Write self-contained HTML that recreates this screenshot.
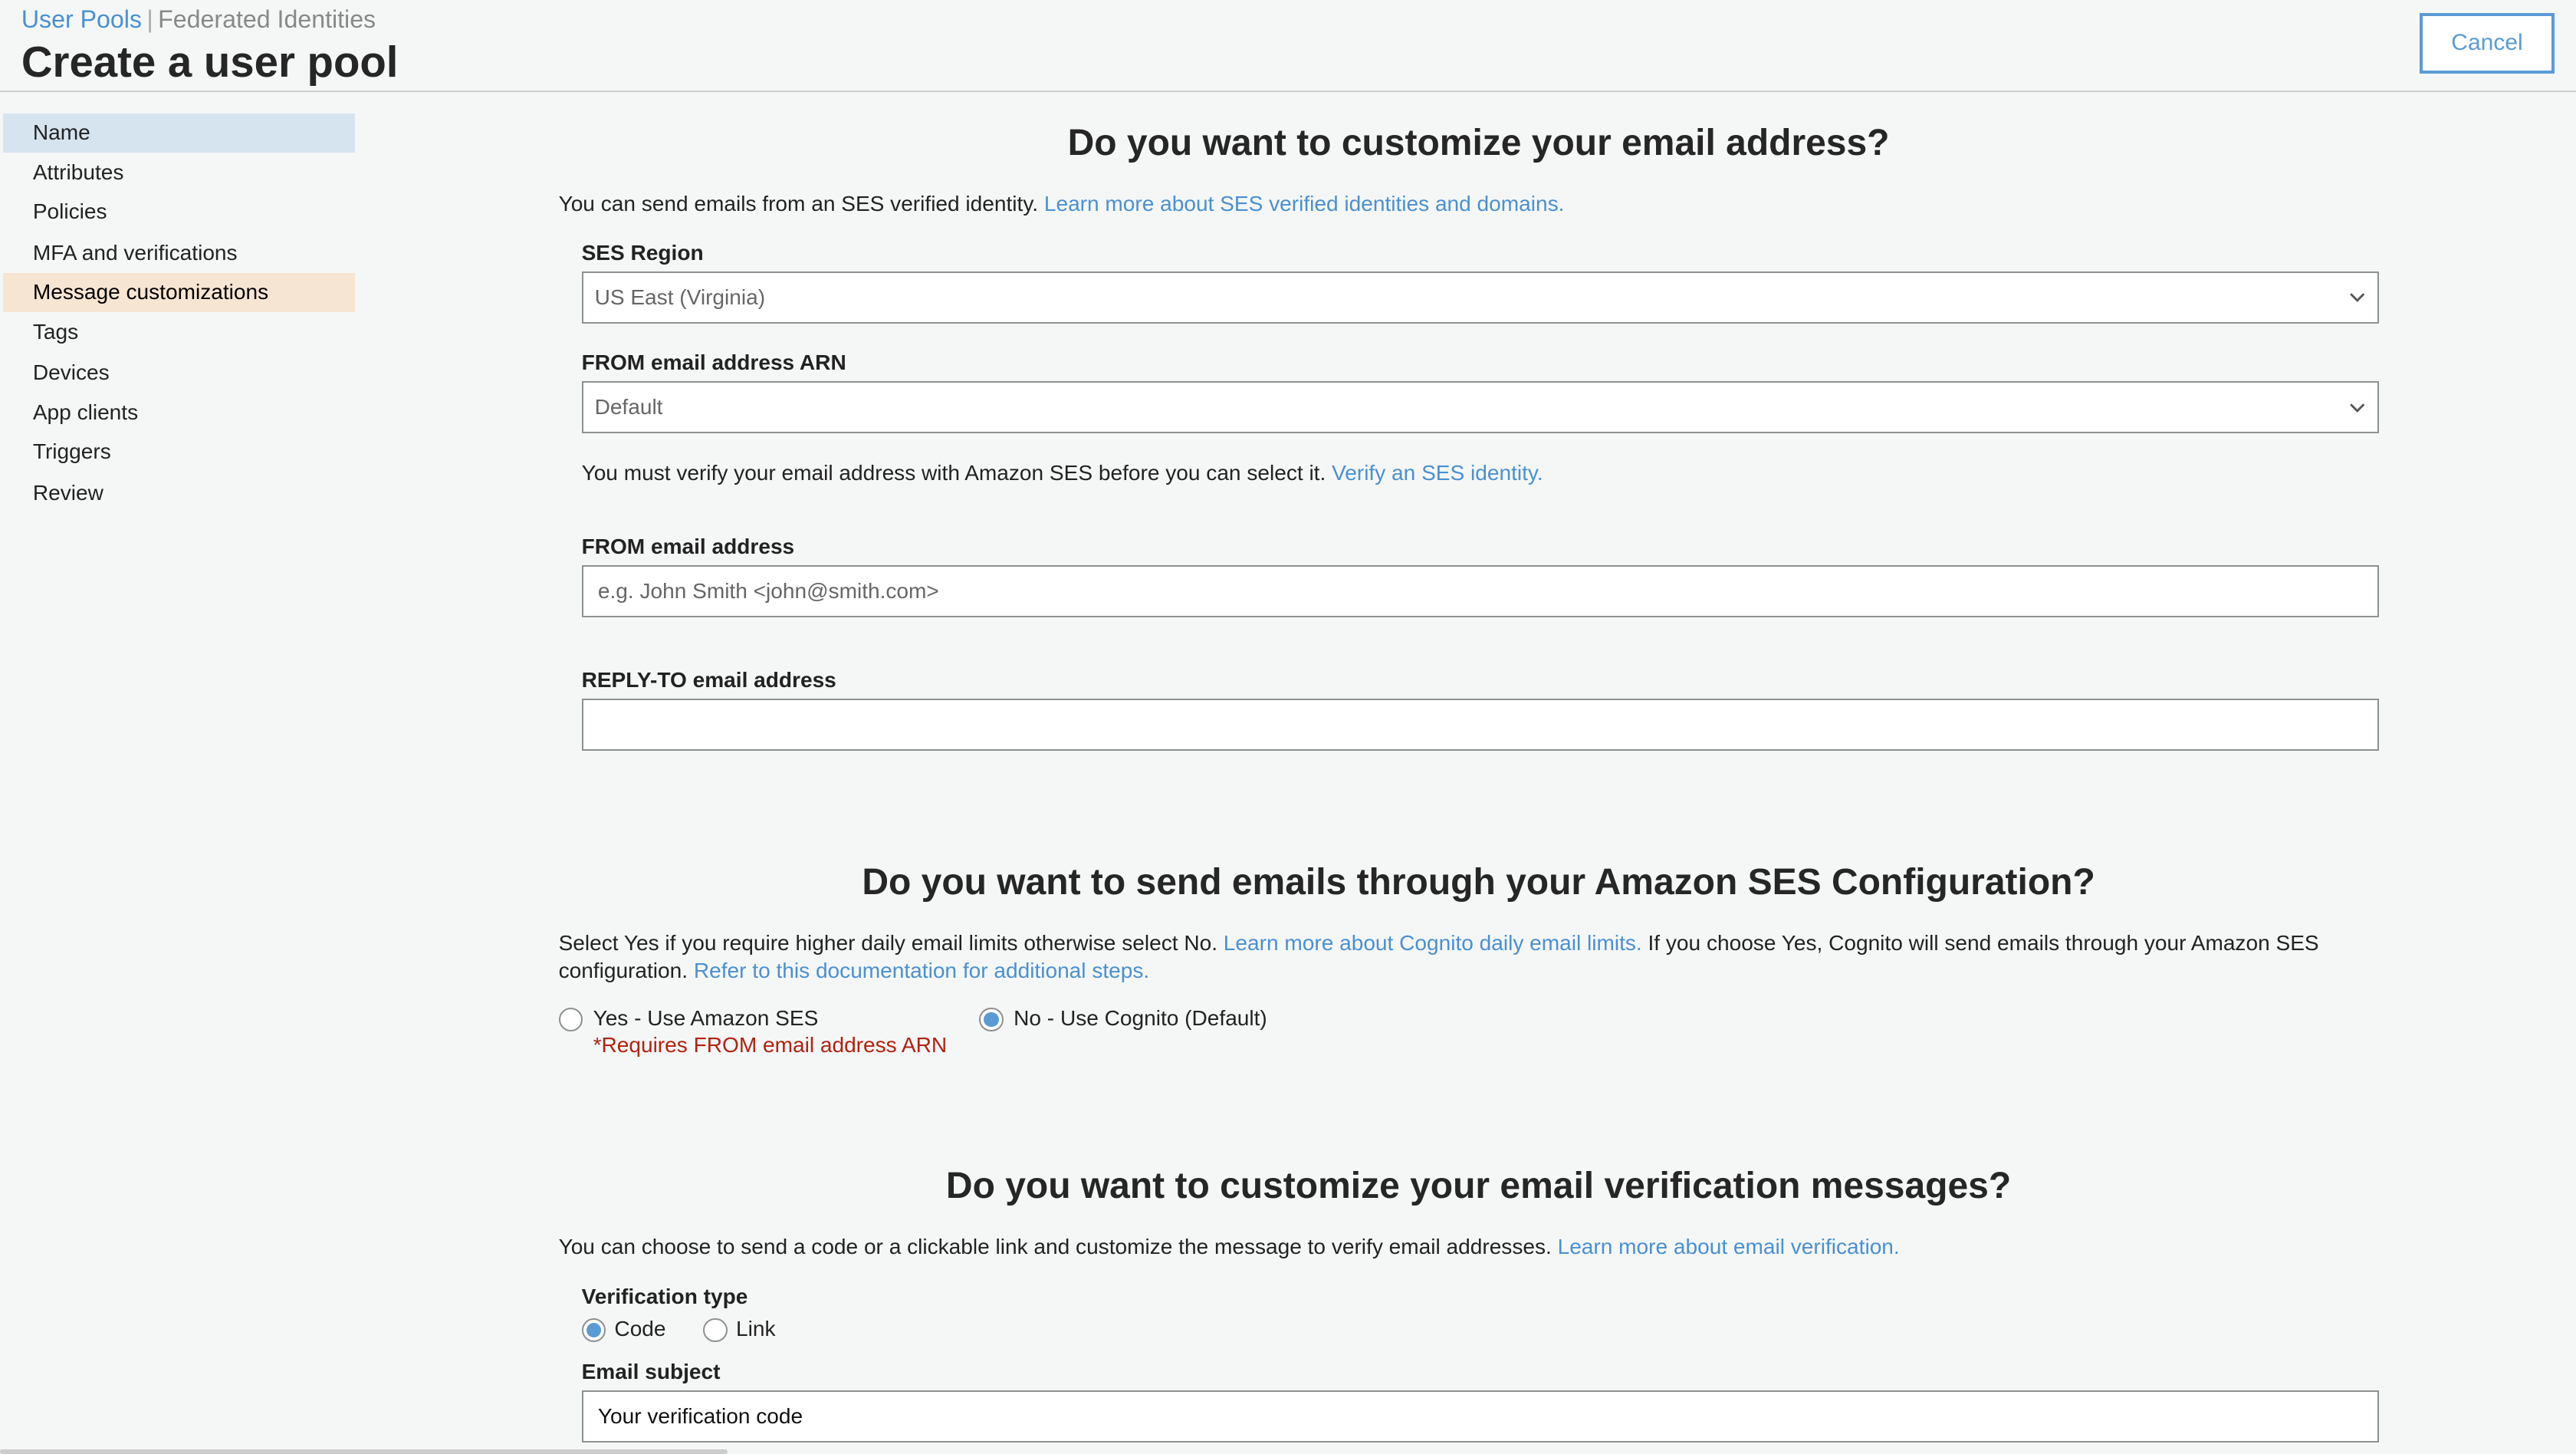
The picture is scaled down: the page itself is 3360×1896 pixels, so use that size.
<!DOCTYPE html>
<html><head><meta charset="utf-8"><style>
html,body{margin:0;padding:0;background:#f5f7f7;overflow:hidden}
#w{zoom:2.142857;width:1568px;height:885px;position:relative;font-family:"Liberation Sans",Arial,sans-serif;color:#222;font-size:13.1px}
.a{position:absolute;white-space:nowrap;line-height:16px}
.l{color:#4a90d0}
.b{font-weight:bold}
.h{position:absolute;left:340px;width:1120px;text-align:center;font-weight:bold;font-size:22.4px;line-height:26px;color:#262626}
.in{position:absolute;left:354px;width:1092px;height:30px;background:#fff;border:1px solid #8d9192;box-sizing:content-box}
.in span{position:absolute;left:7px;top:7px;line-height:16px;color:#666}
.chev{position:absolute;right:7px;top:11px}
.nav{position:absolute;left:2px;width:214px;height:24px}
.nav span{position:absolute;left:18px;top:4px;line-height:16px}
.r{position:absolute;width:13px;height:13px;border:1px solid #8d9192;border-radius:50%;background:#fff}
.r.on::after{content:"";position:absolute;left:2px;top:2px;width:9px;height:9px;border-radius:50%;background:#5a9bd5}
</style></head><body><div id="w">
<div class="a" style="left:13px;top:3px;font-size:15px;line-height:18px"><span class="l">User Pools</span><span style="color:#aaa;margin:0 3px">|</span><span style="color:#888">Federated Identities</span></div>
<div class="a b" style="left:13px;top:23px;font-size:26.3px;line-height:30px;color:#262626">Create a user pool</div>
<div style="position:absolute;left:0;top:55px;width:1568px;height:1px;background:#ccc"></div>
<div style="position:absolute;left:1473px;top:8px;width:78px;height:33px;border:2px solid #5a9bd5;background:#fff;color:#5a9bd5;text-align:center;line-height:33px;font-size:14px">Cancel</div>

<div class="nav" style="top:69px;background:#d6e4f0"><span>Name</span></div>
<div class="nav" style="top:93px"><span>Attributes</span></div>
<div class="nav" style="top:117px"><span>Policies</span></div>
<div class="nav" style="top:142px"><span>MFA and verifications</span></div>
<div class="nav" style="top:166px;background:#f7e5d3"><span style="color:#000">Message customizations</span></div>
<div class="nav" style="top:190px"><span>Tags</span></div>
<div class="nav" style="top:215px"><span>Devices</span></div>
<div class="nav" style="top:239px"><span>App clients</span></div>
<div class="nav" style="top:263px"><span>Triggers</span></div>
<div class="nav" style="top:288px"><span>Review</span></div>

<div class="h" style="top:74px">Do you want to customize your email address?</div>
<div class="a" style="left:340px;top:116px">You can send emails from an SES verified identity. <span class="l">Learn more about SES verified identities and domains.</span></div>
<div class="a b" style="left:354px;top:146px">SES Region</div>
<div class="in" style="top:165px"><span>US East (Virginia)</span><svg class="chev" width="10" height="8" viewBox="0 0 10 8"><path d="M1 2l4 4 4-4" fill="none" stroke="#555" stroke-width="1.3"/></svg></div>
<div class="a b" style="left:354px;top:213px">FROM email address ARN</div>
<div class="in" style="top:232px"><span>Default</span><svg class="chev" width="10" height="8" viewBox="0 0 10 8"><path d="M1 2l4 4 4-4" fill="none" stroke="#555" stroke-width="1.3"/></svg></div>
<div class="a" style="left:354px;top:280px">You must verify your email address with Amazon SES before you can select it. <span class="l">Verify an SES identity.</span></div>
<div class="a b" style="left:354px;top:325px">FROM email address</div>
<div class="in" style="top:344px"><span style="left:9px">e.g. John Smith &lt;john@smith.com&gt;</span></div>
<div class="a b" style="left:354px;top:406px">REPLY-TO email address</div>
<div class="in" style="top:425px"></div>

<div class="h" style="top:524px">Do you want to send emails through your Amazon SES Configuration?</div>
<div class="a" style="left:340px;top:566px">Select Yes if you require higher daily email limits otherwise select No. <span class="l">Learn more about Cognito daily email limits.</span> If you choose Yes, Cognito will send emails through your Amazon SES</div>
<div class="a" style="left:340px;top:583px">configuration. <span class="l">Refer to this documentation for additional steps.</span></div>
<div class="r" style="left:340px;top:613px"></div>
<div class="a" style="left:361px;top:612px">Yes - Use Amazon SES</div>
<div class="a" style="left:361px;top:628px;color:#b0220f">*Requires FROM email address ARN</div>
<div class="r on" style="left:596px;top:613px"></div>
<div class="a" style="left:617px;top:612px">No - Use Cognito (Default)</div>

<div class="h" style="top:709px">Do you want to customize your email verification messages?</div>
<div class="a" style="left:340px;top:751px">You can choose to send a code or a clickable link and customize the message to verify email addresses. <span class="l">Learn more about email verification.</span></div>
<div class="a b" style="left:354px;top:781px">Verification type</div>
<div class="r on" style="left:354px;top:802px"></div>
<div class="a" style="left:374px;top:801px">Code</div>
<div class="r" style="left:428px;top:802px"></div>
<div class="a" style="left:448px;top:801px">Link</div>
<div class="a b" style="left:354px;top:827px">Email subject</div>
<div class="in" style="top:846px"><span style="left:9px;color:#111">Your verification code</span></div>
<div style="position:absolute;left:0;top:882px;width:443px;height:3px;background:#ccc;border-radius:2px"></div>
</div></body></html>
